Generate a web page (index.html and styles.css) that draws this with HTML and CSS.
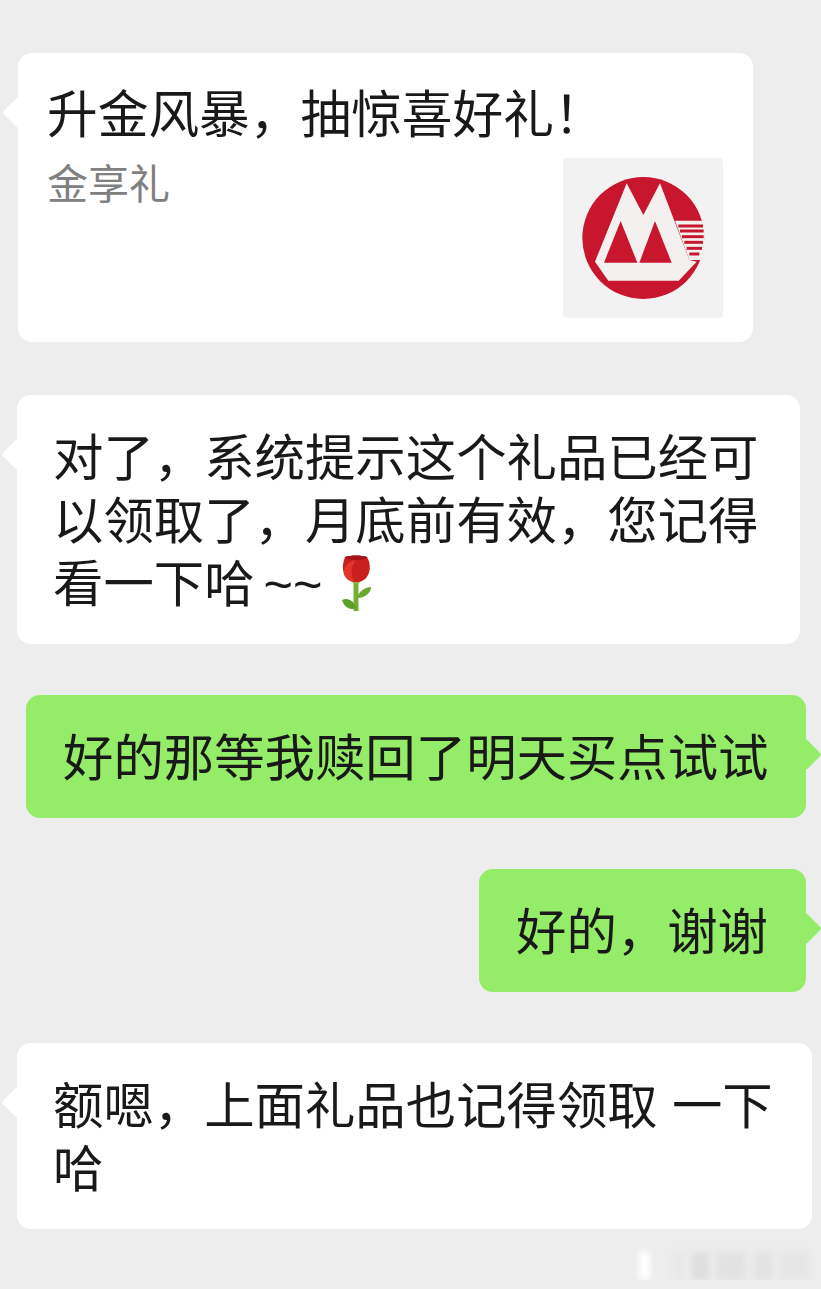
FILE: index.html
```html
<!DOCTYPE html>
<html lang="zh-CN">
<head>
    <meta charset="utf-8">
    <title>聊天记录</title>
    <link rel="stylesheet" href="styles.css">
</head>
<body>
    <div id="chat">
        <div class="bubble left card">
            <div class="card-title">升金风暴，抽惊喜好礼！</div>
            <div class="card-body">
                <div class="card-sub">金享礼</div>
                <div class="card-logo">
                    <svg class="logo" width="160" height="160" viewBox="39 24 480 480">
                        <circle cx="280" cy="264" r="183" fill="#c8162f"/>
                        <!-- stripes on the right edge -->
                        <polygon points="375,212 464,212 464,330 418,330" fill="#f5f0f0"/>
                        <g stroke="#c8162f" stroke-width="9">
                            <line x1="385" y1="228" x2="459" y2="228"/>
                            <line x1="390" y1="243" x2="461" y2="243"/>
                            <line x1="396" y1="260" x2="461" y2="260"/>
                            <line x1="403" y1="277" x2="459" y2="277"/>
                            <line x1="410" y1="295" x2="456" y2="295"/>
                            <line x1="418" y1="312" x2="448" y2="312"/>
                        </g>
                        <!-- the white M -->
                        <polygon points="230,100 280,195 330,100 418,330 440,335 386,392 175,392 135,335" fill="#f5f0f0"/>
                        <polygon points="212,213 262,338 162,338" fill="#c8162f"/>
                        <polygon points="315,213 365,338 268,338" fill="#c8162f"/>
                    </svg>
                </div>
            </div>
        </div>

        <div class="bubble left msg-reminder">对了，系统提示这个礼品已经可以领取了，月底前有效，您记得看一下哈<span class="tilde">~~</span><svg class="rose" width="30" height="58" viewBox="0 0 30 58">
                <path d="M14 24 L14 56" stroke="#74b02f" stroke-width="5" fill="none"/>
                <path d="M15 43 C17 36 23 32 29 32 C29 38 23 43 15 43 Z" fill="#6aa82e"/>
                <path d="M14 53 C12 46 6 42 0 45 C2 52 8 56 14 53 Z" fill="#5f9f2b"/>
                <path d="M7 25 L14 30 L21 25 L17 22 L11 22 Z" fill="#8bb83c"/>
                <path d="M3 2 C9 0 19 0 25 2 C28 7 29 14 26 20 C23 26 18 27 14 27 C9 27 4 25 2 19 C0 13 1 7 3 2 Z" fill="#c9201f"/>
                <path d="M3 2 C9 0 19 0 25 2 C24 4 19 5 14 5 C9 5 4 4 3 2 Z" fill="#a31518"/>
                <path d="M14 5 C9 10 8 19 12 27 C8 26 4 24 2 19 C1 13 5 7 14 5 Z" fill="#e2362f"/>
            </svg></div>

        <div class="bubble right msg-reply">好的那等我赎回了明天买点试试</div>
        <div class="bubble right msg-thanks">好的，谢谢</div>
        <div class="bubble left msg-last">额嗯，上面礼品也记得领取 一下哈</div>
    </div>

    <div id="watermark">
        <span class="mark mark-light"></span>
        <span class="mark mark-faint"></span>
        <span class="mark mark-dark"></span>
        <span class="mark mark-mid"></span>
        <span class="mark mark-short"></span>
        <span class="mark mark-long"></span>
    </div>
</body>
</html>
```

FILE: styles.css
```css
body {
  margin: 0;
  background-color: #ededed;
  font-family: "Noto Sans CJK SC", "Noto Sans", sans-serif;
  color: #191919;
  overflow: hidden;
}

#chat {
  display: flex;
  flex-direction: column;
  align-items: flex-start;
  gap: 51px;
  padding-top: 53px;
}

.bubble {
  position: relative;
  box-sizing: border-box;
  padding: 28px 36px 32px;
  border-radius: 14px;
  font-size: 50.4px;
  line-height: 63px;
  background-color: #fff;
}

.bubble::after {
  content: "";
  position: absolute;
  top: 48px;
  width: 23px;
  height: 23px;
  background-color: inherit;
  transform: rotate(45deg);
  border-radius: 3px;
}

.left {
  margin-left: 17px;
}

.left::after {
  left: -11px;
}

.right {
  align-self: flex-end;
  margin-right: 15px;
  background-color: #95ec69;
}

.right::after {
  right: -11px;
}

.card {
  width: 735px;
  height: 289px;
  margin-left: 18px;
  margin-bottom: 2px;
  padding: 26px 30px 0 29px;
}

.card-title {
  font-size: 50.7px;
  line-height: 64px;
}

.card-body {
  display: flex;
  justify-content: space-between;
}

.card-sub {
  margin-top: 13px;
  font-size: 41px;
  line-height: 50px;
  color: #808080;
}

.card-logo {
  width: 160px;
  height: 160px;
  margin-top: 15px;
  border-radius: 4px;
  background-color: #f2f2f2;
}

.logo {
  display: block;
  filter: blur(0.4px);
}

.msg-reminder {
  width: 783px;
  height: 249px;
}

.msg-reply {
  width: 780px;
  padding-left: 37px;
}

.msg-thanks {
  width: 327px;
  padding-left: 37px;
}

.msg-last {
  width: 795px;
  word-spacing: 3px;
}

.tilde {
  margin-left: 9px;
  font-family: "Liberation Sans", sans-serif;
  line-height: 1;
}

.rose {
  margin: -30px 0 -11px 20px;
}

#watermark {
  display: flex;
  justify-content: flex-end;
  gap: 7px;
  margin-top: 23px;
  padding-right: 11px;
}

.mark {
  height: 28px;
  filter: blur(3px);
}

.mark-light {
  width: 11px;
  background-color: #fff;
}

.mark-faint {
  width: 12px;
  margin-left: 16px;
  background-color: #e8e8e8;
}

.mark-dark {
  width: 17px;
  background-color: #dedede;
}

.mark-mid {
  width: 30px;
  background-color: #e2e2e2;
}

.mark-short {
  width: 20px;
  background-color: #e3e3e3;
}

.mark-long {
  width: 30px;
  background-color: #e6e6e6;
}
```
